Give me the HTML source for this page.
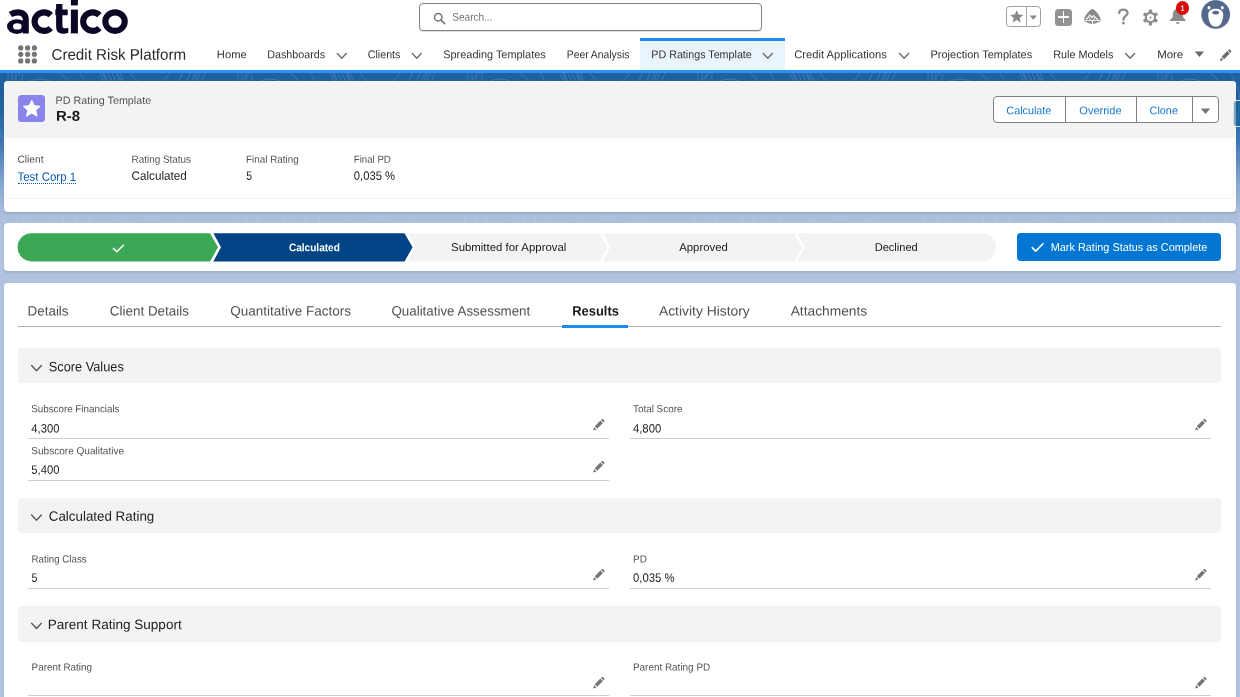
<!DOCTYPE html>
<html><head><meta charset="utf-8"><title>PD Rating Template</title>
<style>
*{box-sizing:border-box;margin:0;padding:0}
html,body{width:1240px;height:697px;overflow:hidden}
body{font-family:"Liberation Sans",sans-serif;color:#181818;position:relative;background:#b0c4df}
.a{position:absolute}
.t{position:absolute;white-space:nowrap;line-height:1;transform-origin:0 0}
#bg{position:absolute;left:0;top:73px;width:1240px;height:624px;background:linear-gradient(#1e60a0 0px,#1e60a0 30px,#3f78b7 70px,#86a6d0 110px,#a9bedc 140px,#b0c4df 165px,#b0c4df 100%)}
#hdr{position:absolute;left:0;top:0;width:1240px;height:70px;background:#fff}
#hline{position:absolute;left:0;top:70px;width:1240px;height:2.6px;background:#2a93f5}
.card{position:absolute;background:#fff;border-radius:4px;box-shadow:0 1.5px 2px rgba(0,0,0,.1)}
.sec{position:absolute;left:17.6px;width:1203.8px;background:#f3f3f3;border-radius:4px}
.ln{position:absolute;height:1px;background:#cfcfcf}
#txt{position:absolute;left:0;top:0;width:1240px;height:697px;will-change:transform}

</style></head><body>
<div id="bg"></div>
<svg class="a" style="left:0;top:73px" width="1240" height="160" viewBox="0 0 1240 160">
<defs><pattern id="topo" width="230" height="120" patternUnits="userSpaceOnUse">
<g fill="none" stroke="#fff" stroke-width="1">
<circle cx="40" cy="30" r="14"/><circle cx="40" cy="30" r="24"/><circle cx="40" cy="30" r="36"/><circle cx="40" cy="30" r="50"/>
<circle cx="150" cy="-10" r="22"/><circle cx="150" cy="-10" r="34"/><circle cx="150" cy="-10" r="48"/>
<path d="M100 0 l10 22 M104 0 l10 22 M108 0 l10 22 M112 0 l10 22 M116 0 l10 22 M120 0 l10 22"/>
<path d="M8 0 v20 M12 0 v20 M16 0 v20 M22 0 v18 M190 0 l-8 20 M195 0 l-8 20 M200 0 l-8 20 M205 0 l-8 20"/>
<circle cx="190" cy="90" r="20"/><circle cx="190" cy="90" r="32"/><circle cx="190" cy="90" r="46"/><circle cx="190" cy="90" r="60"/>
<circle cx="70" cy="130" r="26"/><circle cx="70" cy="130" r="40"/><circle cx="70" cy="130" r="54"/>
</g></pattern>
<linearGradient id="fade" x1="0" y1="0" x2="0" y2="1"><stop offset="0" stop-color="#fff" stop-opacity=".16"/><stop offset=".6" stop-color="#fff" stop-opacity=".12"/><stop offset="1" stop-color="#fff" stop-opacity=".1"/></linearGradient>
<mask id="pm"><rect width="1240" height="160" fill="url(#topo)"/></mask></defs>
<rect width="1240" height="160" fill="url(#fade)" mask="url(#pm)"/>
</svg>
<div id="hdr"></div>
<div id="hline"></div>


<!-- logo -->
<svg class="a" style="left:0;top:0" width="135" height="38" viewBox="0 0 135 38">
<g fill="none" stroke="#0b0626" stroke-width="6.1">
<path d="M10.4 14.4 C12.6 12.9 15 12.35 17.8 12.35 C23 12.35 25.75 15 25.75 19.6 V33.4"/>
<path d="M50.8 15.15 A9.45 9.25 0 1 0 50.8 28.05"/>
<path d="M99.4 15.15 A9.45 9.25 0 1 0 99.4 28.05"/>
<ellipse cx="115.05" cy="21.6" rx="9.7" ry="9.25"/>
</g>
<g fill="#0b0626">
<path fill-rule="evenodd" d="M7 26.55 a9.8 7.35 0 1 0 19.6 0 a9.8 7.35 0 1 0 -19.6 0 z M13 26.4 a4.3 3.2 0 1 1 8.6 0 a4.3 3.2 0 1 1 -8.6 0 z"/>
<path d="M56.1 4 H62.4 V9.6 H67.7 V15.2 H62.4 V25.5 C62.4 27.6 63.4 28.3 65.2 28.3 C66.3 28.3 67.3 28.1 68.3 27.7 V32.7 C67 33.3 65.4 33.7 63.6 33.7 C58.6 33.7 56.1 31.2 56.1 26.4 V15.2 H55.3 V9.6 H56.1 z"/>
<rect x="70.9" y="9.6" width="7" height="23.8"/>
<rect x="70.9" y="-3" width="7" height="8.4"/>
</g>
</svg>

<!-- search -->
<div class="a" style="left:419px;top:3px;width:343px;height:27.5px;border:1px solid #838383;border-radius:4px;background:#fff;box-shadow:0 1px 1px rgba(0,0,0,.15)"></div>
<svg class="a" style="left:433px;top:12px" width="13" height="13" viewBox="0 0 13 13"><circle cx="5.2" cy="5.2" r="3.7" fill="none" stroke="#747474" stroke-width="1.5"/><path d="M8 8 L11.6 11.6" stroke="#747474" stroke-width="1.7" stroke-linecap="round"/></svg>

<!-- active nav tab -->
<div class="a" style="left:640px;top:38px;width:145px;height:32px;background:#e9f4fd"></div>
<div class="a" style="left:640px;top:38px;width:145px;height:3px;background:#1b8df0"></div>

<!-- app launcher dots -->
<svg class="a" style="left:17px;top:44px" width="22" height="22" viewBox="0 0 22 22" fill="#747474">
<circle cx="3.75" cy="3.9" r="2.6"/><circle cx="10.6" cy="3.9" r="2.6"/><circle cx="17.4" cy="3.9" r="2.6"/>
<circle cx="3.75" cy="10.35" r="2.6"/><circle cx="10.6" cy="10.35" r="2.6"/><circle cx="17.4" cy="10.35" r="2.6"/>
<circle cx="3.75" cy="16.9" r="2.6"/><circle cx="10.6" cy="16.9" r="2.6"/><circle cx="17.4" cy="16.9" r="2.6"/>
</svg>

<!-- nav chevrons -->
<svg class="a" style="left:0;top:0" width="1240" height="70" viewBox="0 0 1240 70" fill="none" stroke="#6b6b6b" stroke-width="1.4" stroke-linecap="round" stroke-linejoin="round">
<path d="M337.3 53.6 l4.5 4.6 l4.5 -4.6"/>
<path d="M412.3 53.6 l4.5 4.6 l4.5 -4.6"/>
<path d="M763.3 53.6 l4.5 4.6 l4.5 -4.6"/>
<path d="M899.6 53.6 l4.5 4.6 l4.5 -4.6"/>
<path d="M1125.6 53.6 l4.5 4.6 l4.5 -4.6"/>
<path d="M1194.8 51.6 h9.2 l-4.6 5.4 z" fill="#6b6b6b" stroke="none"/>
<!-- pencil -->
<g fill="#6b6b6b" stroke="none"><path d="M1220 60.9 l0.9 -3.3 l2.4 2.4 z"/><path d="M1221.6 56.7 l5.6 -5.6 l2.5 2.5 l-5.6 5.6 z"/><path d="M1227.9 50.4 l0.8 -0.8 q0.5 -0.4 1 0 l1.5 1.5 q0.4 0.5 0 1 l-0.8 0.8 z"/></g>
</svg>

<!-- card 1 -->
<div class="card" style="left:3.5px;top:80.8px;width:1232px;height:130.8px"></div>
<div class="a" style="left:3.5px;top:80.8px;width:1232px;height:57px;background:#f3f3f3;border-radius:4px 4px 0 0"></div>
<div class="a" style="left:5px;top:137.8px;width:1228.6px;height:61px;border:1px solid #f4f4f4;border-top:none;border-radius:0 0 4px 4px"></div>
<!-- record icon -->
<div class="a" style="left:17.7px;top:94.5px;width:27.5px;height:27.5px;border-radius:3.5px;background:#8a85ec"></div>
<svg class="a" style="left:17.7px;top:94.5px" width="27.5" height="27.5" viewBox="0 0 27.5 27.5"><path d="M13.75 5.2 l2.5 5.5 l5.9 0.6 l-4.4 4 l1.3 5.9 l-5.3 -3.1 l-5.3 3.1 l1.3 -5.9 l-4.4 -4 l5.9 -0.6 z" fill="#fff" stroke="#fff" stroke-width="1" stroke-linejoin="round"/></svg>
<!-- button group -->
<div class="a" style="left:992.6px;top:95.9px;width:226px;height:27.4px;border:1px solid #808080;border-radius:4px;background:#fff"></div>
<div class="a" style="left:1064.8px;top:96px;width:1px;height:27px;background:#808080"></div>
<div class="a" style="left:1135.7px;top:96px;width:1px;height:27px;background:#808080"></div>
<div class="a" style="left:1191.9px;top:96px;width:1px;height:27px;background:#808080"></div>
<svg class="a" style="left:1200px;top:108px" width="12" height="7" viewBox="0 0 12 7"><path d="M0.8 0.4 h9.4 l-4.7 5.5 z" fill="#747474"/></svg>
<!-- link underline -->
<div class="a" style="left:17.6px;top:182.6px;width:58.6px;height:0;border-top:1px dotted #0b5cab"></div>
<!-- sidebar toggle -->
<div class="a" style="left:1233px;top:100px;width:9px;height:27.4px;border:1.4px solid rgba(225,228,235,.95);border-radius:4px 0 0 4px;background:rgba(20,100,150,.55)"></div>

<!-- card 2 path -->
<div class="card" style="left:3.5px;top:222.8px;width:1232px;height:48.6px"></div>
<svg class="a" style="left:0;top:230px" width="1240" height="35" viewBox="0 230 1240 35">
<path d="M31.65 233.2 H210 L218.1 247.3 L210 261.4 H31.65 A14.1 14.1 0 0 1 31.65 233.2 z" fill="#3ca755"/>
<path d="M213.4 233.2 H404.5 L412.6 247.3 L404.5 261.4 H213.3 L221 247.3 z" fill="#014486"/>
<path d="M407.7 233.2 H599.4 L607.4 247.3 L599.4 261.4 H407.7 L415.3 247.3 z" fill="#f3f3f3"/>
<path d="M602.9 233.2 H794 L802.1 247.3 L794 261.4 H602.9 L610.1 247.3 z" fill="#f3f3f3"/>
<path d="M797.5 233.2 H982 A14.1 14.1 0 0 1 982 261.4 H797.5 L804.7 247.3 z" fill="#f3f3f3"/>
<path d="M113.4 248.4 l3.4 3.3 l6.6 -6.4" fill="none" stroke="#fff" stroke-width="1.5" stroke-linecap="round" stroke-linejoin="round"/>
</svg>
<div class="a" style="left:1017.2px;top:233.4px;width:204.2px;height:28px;border-radius:4px;background:#0176d3"></div>
<svg class="a" style="left:1030px;top:240px" width="16" height="14" viewBox="0 0 16 14"><path d="M2.2 7.6 l3.5 3.5 l7.3 -7.4" fill="none" stroke="#fff" stroke-width="1.6" stroke-linecap="round" stroke-linejoin="round"/></svg>

<!-- card 3 -->
<div class="card" style="left:3.5px;top:283px;width:1232px;height:420px"></div>
<div class="a" style="left:17.6px;top:326.2px;width:1203.8px;height:1.2px;background:#aeaeae"></div>
<div class="a" style="left:562px;top:324.6px;width:66.2px;height:3px;background:#1b8df0"></div>

<div class="sec" style="top:347.6px;height:35.6px"></div>
<div class="sec" style="top:498px;height:35.2px"></div>
<div class="sec" style="top:606px;height:35.5px"></div>
<svg class="a" style="left:0;top:340px" width="60" height="300" viewBox="0 340 60 300" fill="none" stroke="#555" stroke-width="1.3" stroke-linecap="round" stroke-linejoin="round">
<path d="M31.6 365.5 l4.9 5.3 l4.9 -5.3"/>
<path d="M31.6 515 l4.9 5.3 l4.9 -5.3"/>
<path d="M31.6 623.2 l4.9 5.3 l4.9 -5.3"/>
</svg>

<!-- field lines -->
<div class="ln" style="left:28px;top:438px;width:581.2px"></div>
<div class="ln" style="left:630px;top:438px;width:581px"></div>
<div class="ln" style="left:28px;top:480px;width:581.2px"></div>
<div class="ln" style="left:28px;top:588px;width:581.2px"></div>
<div class="ln" style="left:630px;top:588px;width:581px"></div>
<div class="ln" style="left:28px;top:694.6px;width:581.2px"></div>
<div class="ln" style="left:630px;top:694.6px;width:581px"></div>

<!-- pencils -->
<svg class="a" style="left:593.2px;top:419.3px" width="12" height="12"><g fill="#747474"><path d="M0.2 11.4 l0.9 -3.3 l2.4 2.4 z"/><path d="M1.8 7.2 l5.6 -5.6 l2.5 2.5 l-5.6 5.6 z"/><path d="M8.1 0.9 l0.8 -0.8 q0.5 -0.4 1 0 l1.5 1.5 q0.4 0.5 0 1 l-0.8 0.8 z"/></g></svg>
<svg class="a" style="left:593.2px;top:460.8px" width="12" height="12"><g fill="#747474"><path d="M0.2 11.4 l0.9 -3.3 l2.4 2.4 z"/><path d="M1.8 7.2 l5.6 -5.6 l2.5 2.5 l-5.6 5.6 z"/><path d="M8.1 0.9 l0.8 -0.8 q0.5 -0.4 1 0 l1.5 1.5 q0.4 0.5 0 1 l-0.8 0.8 z"/></g></svg>
<svg class="a" style="left:593.2px;top:568.7px" width="12" height="12"><g fill="#747474"><path d="M0.2 11.4 l0.9 -3.3 l2.4 2.4 z"/><path d="M1.8 7.2 l5.6 -5.6 l2.5 2.5 l-5.6 5.6 z"/><path d="M8.1 0.9 l0.8 -0.8 q0.5 -0.4 1 0 l1.5 1.5 q0.4 0.5 0 1 l-0.8 0.8 z"/></g></svg>
<svg class="a" style="left:593.2px;top:676.8px" width="12" height="12"><g fill="#747474"><path d="M0.2 11.4 l0.9 -3.3 l2.4 2.4 z"/><path d="M1.8 7.2 l5.6 -5.6 l2.5 2.5 l-5.6 5.6 z"/><path d="M8.1 0.9 l0.8 -0.8 q0.5 -0.4 1 0 l1.5 1.5 q0.4 0.5 0 1 l-0.8 0.8 z"/></g></svg>
<svg class="a" style="left:1195px;top:419.3px" width="12" height="12"><g fill="#747474"><path d="M0.2 11.4 l0.9 -3.3 l2.4 2.4 z"/><path d="M1.8 7.2 l5.6 -5.6 l2.5 2.5 l-5.6 5.6 z"/><path d="M8.1 0.9 l0.8 -0.8 q0.5 -0.4 1 0 l1.5 1.5 q0.4 0.5 0 1 l-0.8 0.8 z"/></g></svg>
<svg class="a" style="left:1195px;top:568.7px" width="12" height="12"><g fill="#747474"><path d="M0.2 11.4 l0.9 -3.3 l2.4 2.4 z"/><path d="M1.8 7.2 l5.6 -5.6 l2.5 2.5 l-5.6 5.6 z"/><path d="M8.1 0.9 l0.8 -0.8 q0.5 -0.4 1 0 l1.5 1.5 q0.4 0.5 0 1 l-0.8 0.8 z"/></g></svg>
<svg class="a" style="left:1195px;top:676.8px" width="12" height="12"><g fill="#747474"><path d="M0.2 11.4 l0.9 -3.3 l2.4 2.4 z"/><path d="M1.8 7.2 l5.6 -5.6 l2.5 2.5 l-5.6 5.6 z"/><path d="M8.1 0.9 l0.8 -0.8 q0.5 -0.4 1 0 l1.5 1.5 q0.4 0.5 0 1 l-0.8 0.8 z"/></g></svg>

<!-- header right icons -->
<div class="a" style="left:1005.7px;top:6px;width:35.6px;height:20.8px;border:1px solid #a0a0a0;border-radius:3.5px;background:#fff"></div>
<div class="a" style="left:1026px;top:6px;width:1px;height:20.8px;background:#a8a8a8"></div>
<svg class="a" style="left:1008.8px;top:9px" width="16" height="15" viewBox="0 0 16 15"><path d="M7.7 1.2 l1.9 4.3 l4.6 0.4 l-3.5 3.1 l1.1 4.6 l-4.1 -2.5 l-4.1 2.5 l1.1 -4.6 l-3.5 -3.1 l4.6 -0.4 z" fill="#8a8a8a"/></svg>
<svg class="a" style="left:1029px;top:14.8px" width="9" height="6" viewBox="0 0 9 6"><path d="M0.6 0.4 h7.4 l-3.7 4.4 z" fill="#8a8a8a"/></svg>
<!-- plus -->
<div class="a" style="left:1055px;top:8.5px;width:17.2px;height:17.2px;border-radius:3.5px;background:#929292"></div>
<div class="a" style="left:1062.8px;top:11.3px;width:1.6px;height:11.6px;background:#fff"></div>
<div class="a" style="left:1057.8px;top:16.3px;width:11.6px;height:1.6px;background:#fff"></div>
<!-- trailhead -->
<svg class="a" style="left:1083px;top:8px" width="19" height="17" viewBox="0 0 19 17">
<path d="M9.4 0.8 C12.2 2.4 16.6 6.2 17.6 11.4 C17.8 12.6 17.4 13.4 16.4 13.8 C14 15 11.6 15.8 9.4 16.1 C7.2 15.8 4.8 15 2.4 13.8 C1.4 13.4 1 12.6 1.2 11.4 C2.2 6.2 6.6 2.4 9.4 0.8 z" fill="#8a8a8a"/>
<path d="M3.2 11.6 l3.6 -4.6 l2.2 2.6 l1.6 -2 l4.4 4.2" fill="none" stroke="#fff" stroke-width="1.1" stroke-linejoin="round"/>
<path d="M1.4 12.6 h16 M9.4 12.6 v3.4 M6 9 l1.6 3.4 M11.4 9.6 l-1 3" fill="none" stroke="#fff" stroke-width="0.9"/>
</svg>
<!-- question -->
<svg class="a" style="left:1116px;top:7px" width="15" height="19" viewBox="0 0 15 19"><path d="M3.2 5.9 C3.4 3.4 5.2 2.6 7.4 2.6 C9.8 2.6 11.5 3.9 11.5 6 C11.5 8.9 7.5 9 7.5 12.4" fill="none" stroke="#8c8c8c" stroke-width="2.4" stroke-linecap="round"/><circle cx="7.4" cy="15.9" r="1.5" fill="#8c8c8c"/></svg>
<!-- gear -->
<svg class="a" style="left:1142px;top:8.5px" width="17" height="17" viewBox="0 0 17 17">
<g fill="#8c8c8c"><circle cx="8.45" cy="8.5" r="5.7"/>
<g><rect x="6.75" y="0.6" width="3.4" height="4" rx="1"/><rect x="6.75" y="12.4" width="3.4" height="4" rx="1"/></g>
<g transform="rotate(60 8.45 8.5)"><rect x="6.75" y="0.6" width="3.4" height="4" rx="1"/><rect x="6.75" y="12.4" width="3.4" height="4" rx="1"/></g>
<g transform="rotate(120 8.45 8.5)"><rect x="6.75" y="0.6" width="3.4" height="4" rx="1"/><rect x="6.75" y="12.4" width="3.4" height="4" rx="1"/></g></g>
<circle cx="8.45" cy="8.5" r="3.5" fill="#fff"/>
<path d="M9 6.2 l-1.9 2.6 h1.4 l-0.5 2.2 l2 -2.8 h-1.5 z" fill="#8c8c8c"/>
</svg>
<!-- bell -->
<svg class="a" style="left:1169px;top:8px" width="18" height="17" viewBox="0 0 18 17"><path d="M8.8 0.8 C5.2 0.8 3.9 3.4 3.9 6.2 C3.9 9.4 2.8 10.6 1.3 11.6 C0.7 12.1 0.9 13.1 1.8 13.1 H15.8 C16.7 13.1 16.9 12.1 16.3 11.6 C14.8 10.6 13.7 9.4 13.7 6.2 C13.7 3.4 12.4 0.8 8.8 0.8 z" fill="#8c8c8c"/><path d="M6.9 14.2 h3.8 a1.9 1.7 0 0 1 -3.8 0 z" fill="#8c8c8c"/></svg>
<div class="a" style="left:1175.8px;top:1.4px;width:13.6px;height:13.6px;border-radius:50%;background:#d60b0b"></div>
<!-- avatar -->
<svg class="a" style="left:1200px;top:0" width="32" height="30" viewBox="0 0 32 30">
<circle cx="15.7" cy="14.4" r="14.5" fill="#8e9bb0"/>
<circle cx="15.7" cy="14.4" r="14" fill="#54698d"/>
<ellipse cx="9" cy="7.8" rx="1.5" ry="1.7" fill="#fff"/><ellipse cx="22.3" cy="7.8" rx="1.5" ry="1.7" fill="#fff"/>
<path d="M15.7 8.8 C20.6 8.8 23.2 11.2 23.2 14.6 C23.2 19.6 21.4 26.8 15.7 26.8 C10 26.8 8.2 19.6 8.2 14.6 C8.2 11.2 10.8 8.8 15.7 8.8 z" fill="#fff"/>
<ellipse cx="15.7" cy="12.6" rx="3.4" ry="1.9" fill="#54698d"/>
</svg>

<!-- text -->
<div id="txt">
<div class="t" style="left:452px;top:11px;font-size:11.2px;color:#747474;transform:translate(0.35px,0.74px) scaleX(0.8933) rotate(0.03deg);">Search...</div>
<div class="t" style="left:51px;top:46px;font-size:15.4px;color:#2a2a2a;transform:translate(0.45px,0.65px) scaleX(0.9845) rotate(0.03deg);">Credit Risk Platform</div>
<div class="t" style="left:216px;top:49px;font-size:11.3px;color:#333333;transform:translate(0.85px,0.23px) scaleX(0.9916) rotate(0.03deg);">Home</div>
<div class="t" style="left:267px;top:49px;font-size:11.3px;color:#333333;transform:translate(0.25px,0.23px) scaleX(0.9483) rotate(0.03deg);">Dashboards</div>
<div class="t" style="left:367px;top:49px;font-size:11.3px;color:#333333;transform:translate(0.75px,0.23px) scaleX(0.9460) rotate(0.03deg);">Clients</div>
<div class="t" style="left:443px;top:49px;font-size:11.3px;color:#333333;transform:translate(0.25px,0.23px) scaleX(0.9673) rotate(0.03deg);">Spreading Templates</div>
<div class="t" style="left:566px;top:49px;font-size:11.3px;color:#333333;transform:translate(0.75px,0.23px) scaleX(0.9147) rotate(0.03deg);">Peer Analysis</div>
<div class="t" style="left:651px;top:49px;font-size:11.3px;color:#333333;transform:translate(0.25px,0.23px) scaleX(0.9496) rotate(0.03deg);">PD Ratings Template</div>
<div class="t" style="left:794px;top:49px;font-size:11.3px;color:#333333;transform:translate(0.25px,0.23px) scaleX(0.9890) rotate(0.03deg);">Credit Applications</div>
<div class="t" style="left:930px;top:49px;font-size:11.3px;color:#333333;transform:translate(0.55px,0.23px) scaleX(0.9714) rotate(0.03deg);">Projection Templates</div>
<div class="t" style="left:1053px;top:49px;font-size:11.3px;color:#333333;transform:translate(0.15px,0.23px) scaleX(0.9598) rotate(0.03deg);">Rule Models</div>
<div class="t" style="left:1157px;top:49px;font-size:11.3px;color:#333333;transform:translate(0.15px,0.23px) scaleX(1.0135) rotate(0.03deg);">More</div>
<div class="t" style="left:55px;top:94px;font-size:10.8px;color:#525252;transform:translate(0.55px,0.88px) scaleX(0.9988) rotate(0.03deg);">PD Rating Template</div>
<div class="t" style="left:56px;top:108px;font-size:14.2px;color:#181818;transform:translate(0.05px,0.75px) scaleX(1.0535) rotate(0.03deg);font-weight:bold;">R-8</div>
<div class="t" style="left:1006px;top:105px;font-size:11.2px;color:#1478d2;transform:translate(0.35px,0.14px) scaleX(0.9651) rotate(0.03deg);">Calculate</div>
<div class="t" style="left:1079px;top:105px;font-size:11.2px;color:#1478d2;transform:translate(0.35px,0.14px) scaleX(0.9842) rotate(0.03deg);">Override</div>
<div class="t" style="left:1149px;top:105px;font-size:11.2px;color:#1478d2;transform:translate(0.55px,0.14px) scaleX(0.9721) rotate(0.03deg);">Clone</div>
<div class="t" style="left:17px;top:154px;font-size:10.3px;color:#525252;transform:translate(0.45px,0.79px) scaleX(0.9900) rotate(0.03deg);">Client</div>
<div class="t" style="left:131px;top:154px;font-size:10.3px;color:#525252;transform:translate(0.55px,0.79px) scaleX(0.9616) rotate(0.03deg);">Rating Status</div>
<div class="t" style="left:246px;top:154px;font-size:10.3px;color:#525252;transform:translate(0.05px,0.79px) scaleX(0.9599) rotate(0.03deg);">Final Rating</div>
<div class="t" style="left:353px;top:154px;font-size:10.3px;color:#525252;transform:translate(0.75px,0.79px) scaleX(0.9399) rotate(0.03deg);">Final PD</div>
<div class="t" style="left:17px;top:170px;font-size:12.1px;color:#0b5cab;transform:translate(0.45px,0.85px) scaleX(0.9483) rotate(0.03deg);">Test Corp 1</div>
<div class="t" style="left:131px;top:169px;font-size:12.1px;color:#222222;transform:translate(0.55px,0.65px) scaleX(0.9660) rotate(0.03deg);">Calculated</div>
<div class="t" style="left:246px;top:169px;font-size:12.1px;color:#222222;transform:translate(0.35px,0.65px) scaleX(0.8571) rotate(0.03deg);">5</div>
<div class="t" style="left:353px;top:169px;font-size:12.1px;color:#222222;transform:translate(0.75px,0.65px) scaleX(0.9300) rotate(0.03deg);">0,035 %</div>
<div class="t" style="left:1180px;top:4px;font-size:7.8px;color:#ffffff;transform:translate(0.75px,0.86px) scaleX(0.8200) rotate(0.03deg);font-weight:bold;">1</div>
<div class="t" style="left:288px;top:242px;font-size:11.1px;color:#ffffff;transform:translate(0.95px,0.15px) scaleX(0.9072) rotate(0.03deg);font-weight:bold;">Calculated</div>
<div class="t" style="left:451px;top:242px;font-size:11.3px;color:#181818;transform:translate(0.05px,0.03px) scaleX(1.0087) rotate(0.03deg);">Submitted for Approval</div>
<div class="t" style="left:679px;top:242px;font-size:11.3px;color:#181818;transform:translate(0.25px,0.03px) scaleX(1.0026) rotate(0.03deg);">Approved</div>
<div class="t" style="left:874px;top:242px;font-size:11.3px;color:#181818;transform:translate(0.65px,0.03px) scaleX(0.9800) rotate(0.03deg);">Declined</div>
<div class="t" style="left:1050px;top:242px;font-size:11.3px;color:#ffffff;transform:translate(0.75px,0.03px) scaleX(0.9634) rotate(0.03deg);">Mark Rating Status as Complete</div>
<div class="t" style="left:27px;top:304px;font-size:13.5px;color:#505050;transform:translate(0.45px,0.51px) scaleX(0.9972) rotate(0.03deg);">Details</div>
<div class="t" style="left:109px;top:304px;font-size:13.5px;color:#505050;transform:translate(0.75px,0.51px) scaleX(0.9965) rotate(0.03deg);">Client Details</div>
<div class="t" style="left:230px;top:304px;font-size:13.5px;color:#505050;transform:translate(0.15px,0.51px) scaleX(1.0004) rotate(0.03deg);">Quantitative Factors</div>
<div class="t" style="left:391px;top:304px;font-size:13.5px;color:#505050;transform:translate(0.45px,0.51px) scaleX(0.9893) rotate(0.03deg);">Qualitative Assessment</div>
<div class="t" style="left:572px;top:304px;font-size:13.5px;color:#181818;transform:translate(0.25px,0.50px) scaleX(0.9574) rotate(0.03deg);font-weight:bold;">Results</div>
<div class="t" style="left:658px;top:304px;font-size:13.5px;color:#505050;transform:translate(0.95px,0.51px) scaleX(1.0264) rotate(0.03deg);">Activity History</div>
<div class="t" style="left:790px;top:304px;font-size:13.5px;color:#505050;transform:translate(0.65px,0.51px) scaleX(1.0201) rotate(0.03deg);">Attachments</div>
<div class="t" style="left:48px;top:360px;font-size:13.5px;color:#222222;transform:translate(0.75px,0.26px) scaleX(0.9467) rotate(0.03deg);">Score Values</div>
<div class="t" style="left:48px;top:509px;font-size:13.5px;color:#222222;transform:translate(0.75px,0.76px) scaleX(0.9901) rotate(0.03deg);">Calculated Rating</div>
<div class="t" style="left:47px;top:618px;font-size:13.5px;color:#222222;transform:translate(0.75px,0.06px) scaleX(1.0028) rotate(0.03deg);">Parent Rating Support</div>
<div class="t" style="left:31px;top:404px;font-size:10.3px;color:#525252;transform:translate(0.25px,0.19px) scaleX(0.9517) rotate(0.03deg);">Subscore Financials</div>
<div class="t" style="left:31px;top:422px;font-size:12.1px;color:#222222;transform:translate(0.25px,0.45px) scaleX(0.9300) rotate(0.03deg);">4,300</div>
<div class="t" style="left:31px;top:446px;font-size:10.3px;color:#525252;transform:translate(0.25px,0.19px) scaleX(0.9771) rotate(0.03deg);">Subscore Qualitative</div>
<div class="t" style="left:31px;top:463px;font-size:12.1px;color:#222222;transform:translate(0.25px,0.65px) scaleX(0.9300) rotate(0.03deg);">5,400</div>
<div class="t" style="left:632px;top:404px;font-size:10.3px;color:#525252;transform:translate(0.95px,0.19px) scaleX(0.9617) rotate(0.03deg);">Total Score</div>
<div class="t" style="left:632px;top:422px;font-size:12.1px;color:#222222;transform:translate(0.95px,0.45px) scaleX(0.9333) rotate(0.03deg);">4,800</div>
<div class="t" style="left:31px;top:554px;font-size:10.3px;color:#525252;transform:translate(0.55px,0.39px) scaleX(0.9429) rotate(0.03deg);">Rating Class</div>
<div class="t" style="left:31px;top:571px;font-size:12.1px;color:#222222;transform:translate(0.55px,0.65px) scaleX(0.8714) rotate(0.03deg);">5</div>
<div class="t" style="left:632px;top:554px;font-size:10.3px;color:#525252;transform:translate(0.95px,0.39px) scaleX(0.9735) rotate(0.03deg);">PD</div>
<div class="t" style="left:632px;top:571px;font-size:12.1px;color:#222222;transform:translate(0.95px,0.65px) scaleX(0.9367) rotate(0.03deg);">0,035 %</div>
<div class="t" style="left:31px;top:662px;font-size:10.3px;color:#525252;transform:translate(0.55px,0.39px) scaleX(0.9599) rotate(0.03deg);">Parent Rating</div>
<div class="t" style="left:632px;top:662px;font-size:10.3px;color:#525252;transform:translate(0.95px,0.39px) scaleX(0.9637) rotate(0.03deg);">Parent Rating PD</div>
</div>
</body></html>
